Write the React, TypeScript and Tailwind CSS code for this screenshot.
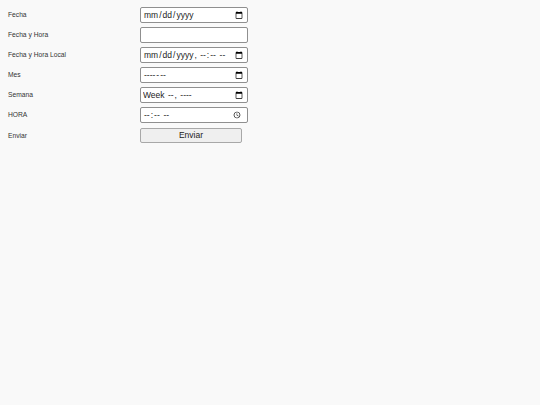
export default function App() {
  const rows = [
    { label: 'Fecha', type: 'date' },
    { label: 'Fecha y Hora', type: 'text' },
    { label: 'Fecha y Hora Local', type: 'datetime-local' },
    { label: 'Mes', type: 'month' },
    { label: 'Semana', type: 'week' },
    { label: 'HORA', type: 'time' },
  ]

  return (
    <div className="min-h-[405px] bg-[#f9f9f9] px-2 pt-[7px] font-['Liberation_Sans',Arial,sans-serif] text-[6.7px] text-[#333]">
      <form className="flex flex-col gap-1">
        {rows.map((row) => (
          <div key={row.label} className="flex h-4 items-center">
            <label className="w-[132px] pt-[1px]">{row.label}</label>
            <input
              type={row.type}
              className="h-4 w-[108px] rounded-[2px] border border-[#8f8f8f] bg-white px-[2px] text-[8.5px] text-[#222]"
            />
          </div>
        ))}
        <div className="mt-[1px] flex items-center">
          <label className="w-[132px] pt-[1px]">Enviar</label>
          <button
            type="submit"
            className="h-[15px] w-[102px] rounded-[2px] border border-[#a8a8a8] bg-[#efefef] text-[8.5px] text-[#222]"
          >
            Enviar
          </button>
        </div>
      </form>
    </div>
  )
}
